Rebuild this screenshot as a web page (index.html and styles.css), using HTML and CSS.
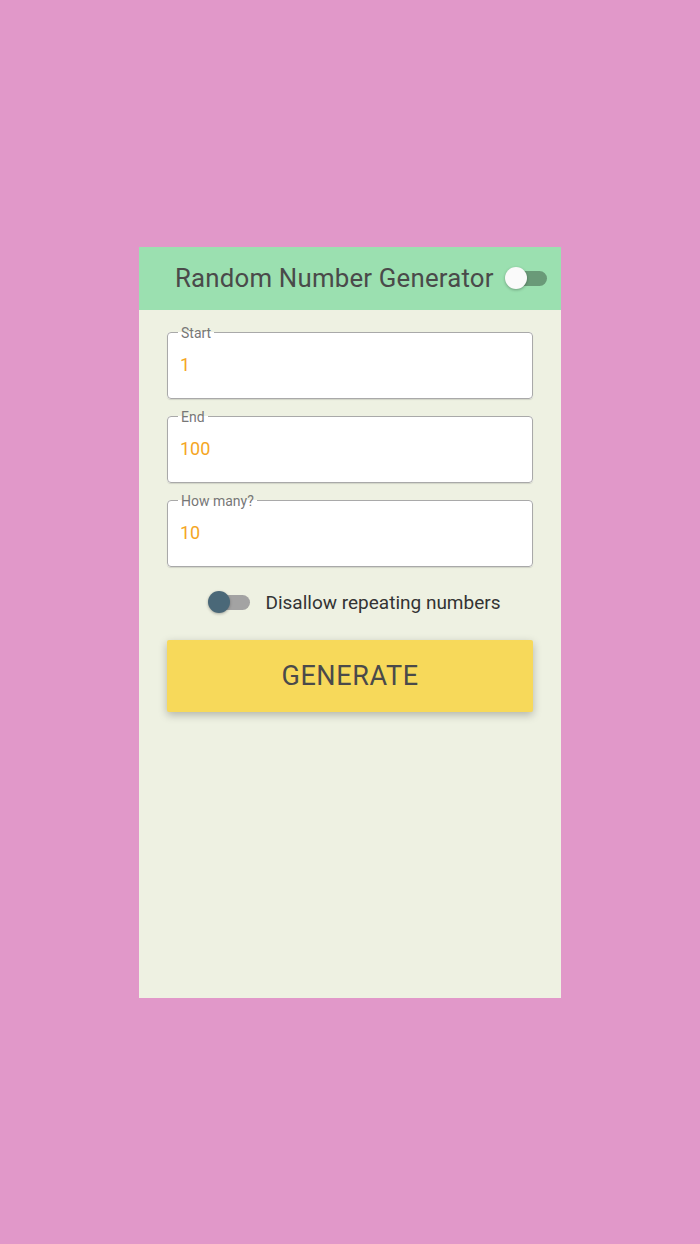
FILE: index.html
```html
<!DOCTYPE html>
<html>
<head>
	<meta charset="utf-8" />
	<title>Random Number Generator</title>
	<link rel="stylesheet" href="styles.css">
</head>
<body>
	<div class="frame">
		<div class="header">
			<span class="title">Random Number Generator</span>
			<span class="switch dark_switch"><span class="track"></span><span class="thumb"></span></span>
		</div>
		<div class="content">
			<fieldset class="field">
				<legend>Start</legend>
				<div class="value">1</div>
			</fieldset>
			<fieldset class="field">
				<legend>End</legend>
				<div class="value">100</div>
			</fieldset>
			<fieldset class="field">
				<legend>How many?</legend>
				<div class="value">10</div>
			</fieldset>
			<div class="repeat_row">
				<span class="switch small_switch"><span class="track"></span><span class="thumb"></span></span>
				<span class="repeat_text">Disallow repeating numbers</span>
			</div>
			<div class="generate">GENERATE</div>
		</div>
	</div>
</body>
</html>
```

FILE: styles.css
```css
body{
	margin: 0;
	background-color: #e198c9;
	font-family: Roboto, "Liberation Sans", sans-serif;
	min-height: 100vh;
	display: flex;
	align-items: center;
	justify-content: center;
}
.frame{
	width: 422px;
	height: 751px;
	background-color: #eef1e2;
	display: flex;
	flex-direction: column;
}
.header{
	height: 63px;
	background-color: #9be0b0;
	display: flex;
	align-items: center;
	justify-content: space-between;
	padding: 0 14px 0 36px;
}
.title{
	font-size: 25.8px;
	color: #4a4a4a;
	letter-spacing: 0.2px;
	white-space: nowrap;
	flex-shrink: 0;
}
.switch{
	position: relative;
	display: inline-block;
	flex-shrink: 0;
	width: 42px;
	height: 22px;
}
.switch .track{
	position: absolute;
	left: 2px;
	right: 0;
	top: 4px;
	height: 15px;
	border-radius: 8px;
}
.switch .thumb{
	position: absolute;
	left: 0;
	top: 0;
	width: 22px;
	height: 22px;
	border-radius: 50%;
}
.dark_switch .track{
	background-color: #6a9a78;
}
.dark_switch .thumb{
	background-color: #fafafa;
	box-shadow: 0 1px 3px rgba(0,0,0,0.3);
}
.small_switch .track{
	background-color: #a3a3a3;
}
.small_switch .thumb{
	background-color: #4a6878;
	box-shadow: 0 1px 3px rgba(0,0,0,0.3);
}
.content{
	padding: 15px 28px 0 28px;
	display: flex;
	flex-direction: column;
}
.field{
	margin: 0 0 10px 0;
	height: 74px;
	box-sizing: border-box;
	border: 1.5px solid #a9a9a9;
	border-radius: 4px;
	background-color: #fff;
	padding: 0 12px;
	box-shadow: 0 1px 1px rgba(0,0,0,0.12);
}
.field legend{
	font-size: 14px;
	color: #777;
	padding: 0 3px;
	margin-left: -2px;
}
.value{
	font-size: 18px;
	color: #f5a623;
	margin-top: 13px;
}
.repeat_row{
	display: flex;
	align-items: center;
	justify-content: center;
	gap: 15px;
	margin-top: 14px;
	padding-left: 9px;
}
.repeat_text{
	font-size: 19px;
	color: #333;
}
.generate{
	margin-top: 26px;
	height: 72px;
	background-color: #f7d95a;
	border-radius: 2px;
	box-shadow: 0 3px 8px rgba(0,0,0,0.25);
	display: flex;
	align-items: center;
	justify-content: center;
	font-size: 27px;
	color: #4a4a4a;
	letter-spacing: 0.6px;
}
```
